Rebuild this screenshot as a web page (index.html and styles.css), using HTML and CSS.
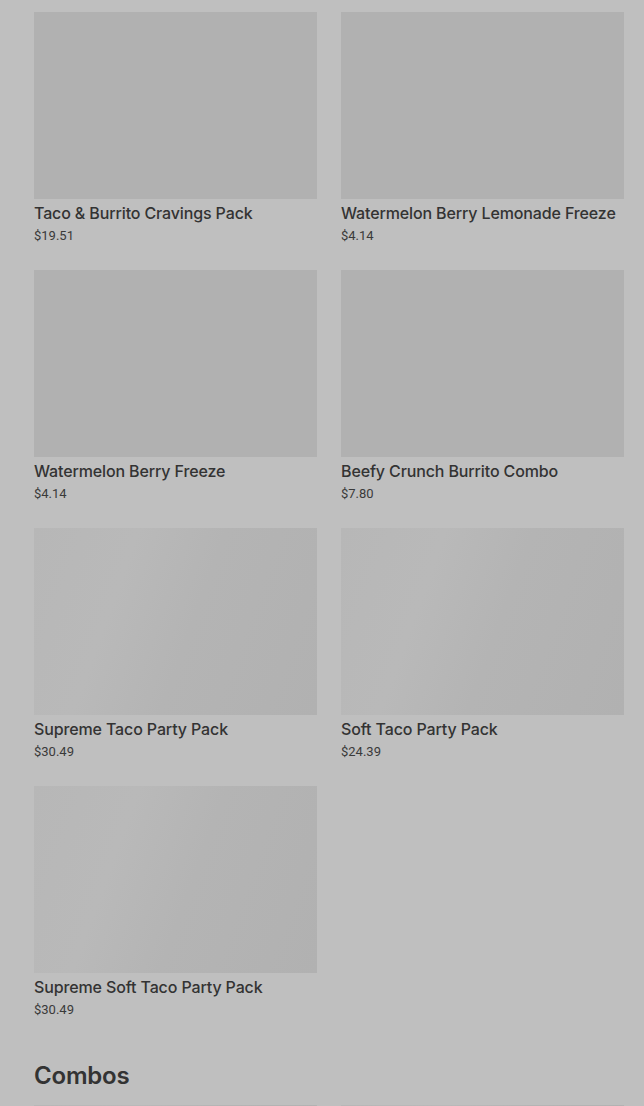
FILE: index.html
```html
<!DOCTYPE html>
<html>
<head>
<meta charset="utf-8">
<link rel="stylesheet" href="styles.css">
</head>
<body>
<main class="page">
  <section class="grid">
    <div class="card"><div class="thumb"></div><div class="title">Taco &amp; Burrito Cravings Pack</div><div class="price">$19.51</div></div>
    <div class="card"><div class="thumb"></div><div class="title">Watermelon Berry Lemonade Freeze</div><div class="price">$4.14</div></div>
    <div class="card"><div class="thumb"></div><div class="title">Watermelon Berry Freeze</div><div class="price">$4.14</div></div>
    <div class="card"><div class="thumb"></div><div class="title">Beefy Crunch Burrito Combo</div><div class="price">$7.80</div></div>
    <div class="card"><div class="thumb shimmer"></div><div class="title">Supreme Taco Party Pack</div><div class="price">$30.49</div></div>
    <div class="card"><div class="thumb shimmer"></div><div class="title">Soft Taco Party Pack</div><div class="price">$24.39</div></div>
    <div class="card"><div class="thumb shimmer"></div><div class="title">Supreme Soft Taco Party Pack</div><div class="price">$30.49</div></div>
  </section>
  <h2 class="section-title">Combos</h2>
  <section class="grid">
    <div class="card"><div class="thumb shimmer"></div></div>
    <div class="card"><div class="thumb shimmer"></div></div>
  </section>
</main>
</body>
</html>
```
FILE: styles.css
```css
html, body {
  margin: 0;
  padding: 0;
  background: #bfbfbf;
  overflow: hidden;
}
.page {
  padding: 12px 20px 0 34px;
  font-family: "Inter", "Roboto", "Liberation Sans", sans-serif;
  color: #333333;
}
.grid {
  display: grid;
  grid-template-columns: 283px 283px;
  column-gap: 24px;
  row-gap: 24px;
}
.thumb {
  height: 187px;
  background: #b1b1b1;
}
.thumb.shimmer {
  background: linear-gradient(110deg, #b7b7b7 0%, #b9b9b9 30%, #b4b4b4 55%, #b1b1b1 100%);
}
.title {
  margin-top: 4px;
  font-size: 16px;
  line-height: 20px;
  font-weight: 500;
  letter-spacing: -0.13px;
  white-space: nowrap;
}
.price {
  margin-top: 3px;
  font-family: "Roboto", "Liberation Sans", sans-serif;
  font-size: 13px;
  line-height: 20px;
  color: #3a3a3a;
}
.section-title {
  margin: 40px 0 13px;
  font-size: 24px;
  line-height: 32px;
  font-weight: 600;
  letter-spacing: -0.2px;
}
```
